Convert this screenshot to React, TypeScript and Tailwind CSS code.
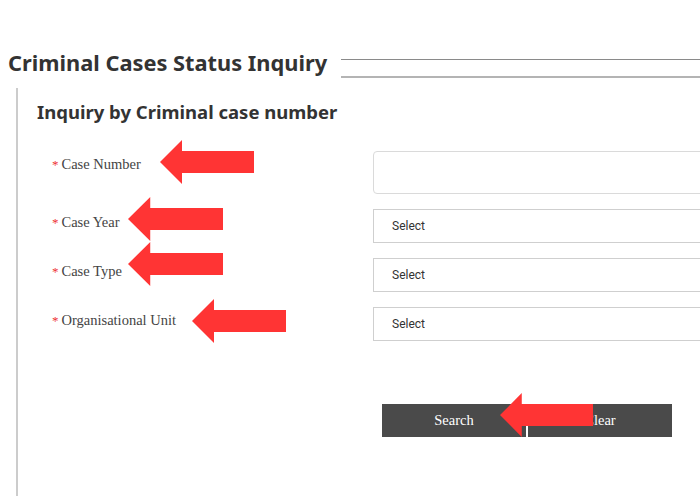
const Arrow = ({ className }: { className: string }) => (
  <svg className={`absolute h-[44px] ${className}`} viewBox="0 0 94 44" preserveAspectRatio="none">
    <polygon points="0,22 22,0 22,11 94,11 94,33 22,33 22,44" fill="#ff3434" />
  </svg>
);

const Label = ({ text }: { text: string }) => (
  <div className="w-[336px] shrink-0 pt-[6px] pl-[15px] text-[14.5px] leading-[15px] text-[#444] font-['Liberation_Serif',serif]">
    <span className="text-[#e33] text-[13px] mr-[3px]">*</span>
    {text}
  </div>
);

const SelectBox = () => (
  <div className="w-[360px] shrink-0 h-[34px] border border-[#cfcfcf] flex items-center pl-[18px] text-[12px] text-[#333] font-['Roboto',sans-serif]">
    Select
  </div>
);

const App = () => (
  <div className="relative w-[700px] h-[500px] overflow-hidden bg-white">
    <div className="flex items-start pt-[48px] pl-2">
      <h1 className="text-[21.8px] leading-[30px] font-bold text-[#333] font-['Noto_Sans',sans-serif]">
        Criminal Cases Status Inquiry
      </h1>
      <div className="flex-1 ml-[14px] mt-[11px] h-[19px] border-t border-b-2 border-t-[#8a8a8a] border-b-[#b4b4b4]" />
    </div>

    <div className="ml-4 mt-[10px] h-[408px] border-l-2 border-[#cccccc] pl-[19px] pt-[12px]">
      <h2 className="text-[18.5px] leading-[24px] font-bold text-[#333] font-['Noto_Sans',sans-serif]">
        Inquiry by Criminal case number
      </h2>

      <div className="mt-[27px] flex flex-col gap-[15px]">
        <div className="flex items-start">
          <Label text="Case Number" />
          <div className="w-[360px] shrink-0 h-[43px] border border-[#dadada] rounded-[4px]" />
        </div>
        <div className="flex items-start">
          <Label text="Case Year" />
          <SelectBox />
        </div>
        <div className="flex items-start">
          <Label text="Case Type" />
          <SelectBox />
        </div>
        <div className="flex items-start">
          <Label text="Organisational Unit" />
          <SelectBox />
        </div>
      </div>

      <div className="mt-[63px] ml-[345px] flex gap-[2px]">
        <button className="w-[144px] h-[33px] bg-[#4a4a4a] text-white text-[14.5px] font-['Liberation_Serif',serif]">
          Search
        </button>
        <button className="w-[144px] h-[33px] bg-[#4a4a4a] text-white text-[14.5px] font-['Liberation_Serif',serif]">
          Clear
        </button>
      </div>
    </div>

    <Arrow className="left-[160px] top-[140px] w-[94px]" />
    <Arrow className="left-[128px] top-[197px] w-[95px]" />
    <Arrow className="left-[128px] top-[242px] w-[95px]" />
    <Arrow className="left-[192px] top-[299px] w-[94px]" />
    <Arrow className="left-[500px] top-[393px] w-[93px]" />
  </div>
);

export default App;
